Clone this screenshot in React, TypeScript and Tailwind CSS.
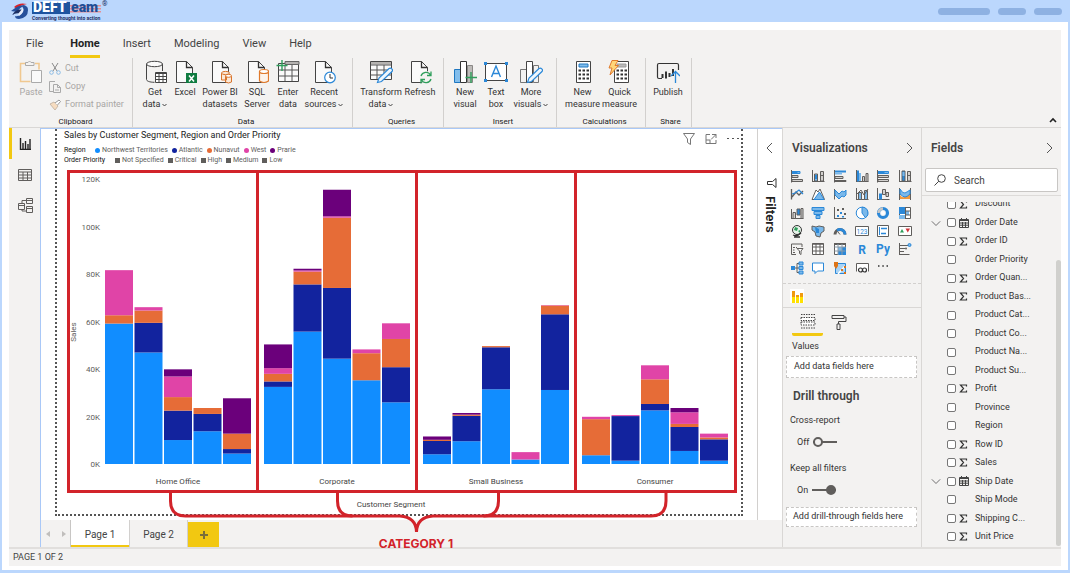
import type { ReactNode } from 'react';
import clsx from 'clsx';

const REGIONS = [
  { name: 'Northwest Territories', color: '#118dff' },
  { name: 'Atlantic', color: '#12239e' },
  { name: 'Nunavut', color: '#e66c37' },
  { name: 'West', color: '#e044a7' },
  { name: 'Prarie', color: '#6b007b' },
];

const PRIORITIES = ['Not Specified', 'Critical', 'High', 'Medium', 'Low'];

// sales in thousands, one row per priority, columns follow REGIONS
const SEGMENTS = [
  {
    name: 'Home Office',
    bars: [
      [59.2, 0, 3.5, 19, 0],
      [47, 12.5, 5.2, 1.4, 0],
      [10.1, 12.4, 5.7, 8.7, 3],
      [13.8, 7.3, 2.5, 0, 0],
      [4.4, 1.9, 6.5, 0, 14.9],
    ],
  },
  {
    name: 'Corporate',
    bars: [
      [32.5, 2.3, 3.2, 2.4, 10],
      [55.8, 19.9, 5.4, 0.5, 0.7],
      [44.4, 29.8, 29.6, 0.6, 11.2],
      [35.3, 0, 11.4, 1.6, 0],
      [26, 14.8, 11.9, 6.6, 0],
    ],
  },
  {
    name: 'Small Business',
    bars: [
      [4.1, 5.6, 0.5, 0, 1.4],
      [9.6, 10.7, 0.5, 0, 0.7],
      [31.5, 17.7, 0.5, 0, 0],
      [1.9, 0, 0, 3.1, 0],
      [31.2, 31.9, 3.7, 0.2, 0],
    ],
  },
  {
    name: 'Consumer',
    bars: [
      [3.7, 0, 15.2, 1, 0],
      [1.4, 18.8, 0, 0.4, 0],
      [22.6, 2.7, 10.4, 5.9, 0],
      [5.5, 10.1, 1.3, 4.9, 1.8],
      [1.4, 9, 0.8, 1.6, 0],
    ],
  },
];

type FieldKind = 'sum' | 'date' | 'text';

const FIELDS: { name: string; kind: FieldKind }[] = [
  { name: 'Discount', kind: 'sum' },
  { name: 'Order Date', kind: 'date' },
  { name: 'Order ID', kind: 'sum' },
  { name: 'Order Priority', kind: 'text' },
  { name: 'Order Quan...', kind: 'sum' },
  { name: 'Product Bas...', kind: 'sum' },
  { name: 'Product Cat...', kind: 'text' },
  { name: 'Product Co...', kind: 'text' },
  { name: 'Product Na...', kind: 'text' },
  { name: 'Product Su...', kind: 'text' },
  { name: 'Profit', kind: 'sum' },
  { name: 'Province', kind: 'text' },
  { name: 'Region', kind: 'text' },
  { name: 'Row ID', kind: 'sum' },
  { name: 'Sales', kind: 'sum' },
  { name: 'Ship Date', kind: 'date' },
  { name: 'Ship Mode', kind: 'text' },
  { name: 'Shipping C...', kind: 'sum' },
  { name: 'Unit Price', kind: 'sum' },
];

/* ---------- icons ---------- */

interface SvgProps {
  w: number;
  h: number;
  className?: string;
  children: ReactNode;
}

function Svg({ w, h, className, children }: SvgProps) {
  return (
    <svg width={w} height={h} viewBox={`0 0 ${w} ${h}`} fill="none" aria-hidden="true" className={clsx('shrink-0', className)}>
      {children}
    </svg>
  );
}

function Chevron({ dir, className }: { dir: 'left' | 'right' | 'down'; className?: string }) {
  const d = { left: 'M8 1 3 6l5 5', right: 'M4 1l5 5-5 5', down: 'M1 4l5 5 5-5' }[dir];
  return (
    <Svg w={12} h={12} className={className}>
      <path d={d} stroke="#555" />
    </Svg>
  );
}

function Caret() {
  return (
    <svg width="5" height="4" viewBox="0 0 5 4" fill="none" className="ml-0.5 inline-block" aria-hidden="true">
      <path d="M.5 1l2 2 2-2" stroke="#444" />
    </svg>
  );
}

function Page({ x = 3 }: { x?: number }) {
  return (
    <g transform={`translate(${x} 0)`}>
      <path d="M.5 1.500h10l6 6v15H.5z" fill="#fafafa" stroke="#444" />
      <path d="M10.500 1.500v6h6" stroke="#333" strokeWidth="1.300" />
    </g>
  );
}

function Pencil() {
  return (
    <path d="M8.500 22.500l1.500-4.500L20 8.500q1.500-1 2.800.3t.2 2.700L12.500 21.500z" fill="#eef6fc" stroke="#2b88d8" strokeWidth="1.200" />
  );
}

const paste = (
  <>
    <path d="M6 3.500H1.500v18h10M16 3.500h4v6" stroke="#f0c890" strokeWidth="1.600" />
    <path d="M6.500 5.500v-3h2.500q1.500-3 3 0h3v3z" stroke="#aaa" fill="#f3f2f1" />
    <path d="M12.500 10.500h10v12h-10z" fill="#fafafa" stroke="#aaa" />
  </>
);

const getData = (
  <>
    <path d="M3.500 4v15.500c0 1.500 3 2.800 8 2.800M19.500 4v7" stroke="#444" />
    <ellipse cx="11.500" cy="4" rx="8" ry="2.700" fill="#fafafa" stroke="#444" />
    <path d="M12.500 12.500h11v10h-11z" fill="#fff" stroke="#444" />
    <path d="M12.500 13.500h11M12.500 16.500h11M12.500 19.500h11M16 13v9M20 13v9" stroke="#444" />
  </>
);

const excel = (
  <>
    <Page x={3} />
    <path d="M13 13h11v10H13z" fill="#107c41" />
    <path d="M16 15.500l5 6m0-6l-5 6" stroke="#fff" strokeWidth="1.500" />
  </>
);

const powerBi = (
  <>
    <Page x={4} />
    <path d="M13.500 13v7h5v-7M17.500 16v6q3 2 6 0v-6" fill="#fbe8d6" stroke="#d9742b" />
    <ellipse cx="17.500" cy="13" rx="4" ry="1.600" fill="#fbe8d6" stroke="#d9742b" />
    <ellipse cx="20.500" cy="15.800" rx="3" ry="1.500" fill="#fff" stroke="#d9742b" />
  </>
);

const sqlServer = (
  <>
    <Page x={3} />
    <path d="M14.500 11.500v9.500q4.500 3 9 0v-9.500" fill="#fdf3ea" stroke="#e07a2c" strokeWidth="1.200" />
    <ellipse cx="19" cy="11.500" rx="4.500" ry="2" fill="#fff" stroke="#e07a2c" strokeWidth="1.200" />
  </>
);

const enterData = (
  <>
    <path d="M2.500 3.500h20v18h-20z" fill="#fafafa" stroke="#444" />
    <path d="M9 1.500h14v3H9z" fill="#b5b3b1" stroke="#666" />
    <path d="M2.500 10h20M2.500 16h20M9 5v16M16 5v16" stroke="#555" />
    <path d="M6 0v11M.5 5.500h11" stroke="#2f9e5b" strokeWidth="1.400" />
  </>
);

const recent = (
  <>
    <Page x={3} />
    <circle cx="18" cy="17.500" r="5.300" fill="#fff" stroke="#2b88d8" strokeWidth="1.200" />
    <path d="M18 14v4h3" stroke="#333" />
  </>
);

const transform = (
  <>
    <path d="M1.500 1.500h21v18h-21z" fill="#fafafa" stroke="#444" />
    <path d="M2 2h20v2.500H2z" fill="#b5b3b1" />
    <path d="M1.500 5h21M1.500 10h21M1.500 15h21M8 5v14M15 5v14" stroke="#555" />
    <Pencil />
  </>
);

const refresh = (
  <>
    <Page x={3} />
    <circle cx="18" cy="17.500" r="6.500" fill="#f3f2f1" />
    <path d="M13 16a5.200 5.200 0 0 1 9.500-1M23 19a5.200 5.200 0 0 1-9.500 1M23 11.500v4h-4M13 23.500v-4h4" stroke="#2f9e5b" strokeWidth="1.300" />
  </>
);

const newVisual = (
  <>
    <path d="M14.500 5.500h5v17h-5z" fill="#bdbbb9" stroke="#8a8886" />
    <path d="M1.500 9.500h6v13h-6z" fill="#83beec" stroke="#1f77c0" />
    <path d="M7.500 1.500h6v21h-6z" fill="#fff" stroke="#333" />
    <path d="M18 12v11M12.500 17.500H24" stroke="#2f9e5b" strokeWidth="1.400" />
  </>
);

const textBox = (
  <>
    <path d="M1.500 3.500h21v17h-21z" fill="#fff" stroke="#444" />
    <path d="M0 2h3v3H0zM21 2h3v3h-3zM0 19h3v3H0zM21 19h3v3h-3z" fill="#2b88d8" />
    <path d="M7.500 17L12 6l4.500 11M9 13.500h6" stroke="#2b88d8" strokeWidth="1.400" />
  </>
);

const moreVisuals = (
  <>
    <path d="M14.500 5.500h5v17h-5zM1.500 9.500h6v13h-6z" fill="#f3f2f1" stroke="#777" />
    <path d="M7.500 1.500h6v21h-6z" fill="#fff" stroke="#444" />
    <Pencil />
  </>
);

function Keypad({ x, flash }: { x: number; flash?: boolean }) {
  return (
    <g transform={`translate(${x} 0)`}>
      <path d="M.5 1.500h14v21H.5z" fill="#fff" stroke="#444" />
      <path d="M3 4h9v3H3z" fill={flash ? '#bbb' : '#83beec'} stroke={flash ? '#999' : '#1f77c0'} />
      {[9, 13, 17].map((y) => (
        <path key={y} d={`M2.500 ${y + 1.500}h2.500m1.500 0h2.500m1.500 0h2.500`} stroke="#333" strokeWidth="2" />
      ))}
    </g>
  );
}

const quickMeasure = (
  <>
    <Keypad x={6} flash />
    <path d="M4 .5h6l-3 5h3.500L2 15l2-7H1z" fill="#ffd67a" stroke="#e07a2c" />
  </>
);

const publish = (
  <>
    <path d="M6 18.500H3q-1.500 0-1.500-1.500V5q0-1.500 1.500-1.500h18q1.500 0 1.500 1.500v5" fill="none" stroke="#333" strokeWidth="1.200" />
    <path d="M6.500 14v4M10 11.500v7M13.500 13v4M17 9v7" stroke="#333" strokeWidth="2" />
    <path d="M19.500 23V11.500M15 16l4.500-4.500L24 16" stroke="#2b88d8" strokeWidth="1.300" />
  </>
);

const G = '#605e5c';
const B = '#2b88d8';
const L = '#7ab8ea';

const VISUALS: { label: string; art: ReactNode }[] = [
  { label: 'Stacked bar chart', art: <><path d="M1.500 1v12.500" stroke={G} /><path d="M2 2h5v3H2z" fill={B} /><path d="M7 2.500h3v2H7z" fill={L} stroke={B} /><path d="M2 6.500h6v2H2zM2 10.500h10.500v2H2z" fill="#d2d0ce" stroke={G} /></> },
  { label: 'Stacked column chart', art: <><path d="M1.500 1v12M1 12.500h12.500" stroke={G} /><path d="M3.500 5h3v7h-3z" fill={L} stroke={G} /><path d="M4 6h2v4H4z" fill={B} /><path d="M9.500 2.500h3v9.500h-3zM9.500 6.500h3" fill="#d2d0ce" stroke={G} /></> },
  { label: 'Clustered bar chart', art: <><path d="M1.500 1v12.500" stroke={G} /><path d="M2 1.500h11v2H2z" fill={B} /><path d="M2 3.500h7v2H2z" fill={L} /><path d="M2 7.500h8v2H2zM2 11.500h11v1H2z" fill="#d2d0ce" stroke={G} /></> },
  { label: 'Clustered column chart', art: <><path d="M1.500 1v12M1 12.500h12.500" stroke={G} /><path d="M2 1.500h2v11H2z" fill={B} /><path d="M4 4h2v8H4z" fill={L} /><path d="M7.500 7.500h2v5h-2zM11 4.500h2v8h-2z" fill="#d2d0ce" stroke={G} /></> },
  { label: '100% stacked bar chart', art: <><path d="M1.500 1v12.500" stroke={G} /><path d="M2 2h6v3H2z" fill={B} /><path d="M8 2.500h4.500v2H8z" fill={L} stroke={B} /><path d="M2 6.500h10.500v2H2zM2 10.500h10.500v2H2z" fill="#d2d0ce" stroke={G} /></> },
  { label: '100% stacked column chart', art: <><path d="M1.500 1v12M1 12.500h12.500" stroke={G} /><path d="M4 2h3v10H4z" fill={B} stroke={G} /><path d="M4.500 3h2v4h-2z" fill={L} /><path d="M9.500 2.500h3v9.500h-3zM9.500 6.500h3" fill="#d2d0ce" stroke={G} /></> },
  { label: 'Line chart', art: <><path d="M1.500 2v10.500M2 10l4-5 3 3 4-4" stroke={G} strokeWidth="1.300" /><path d="M2 7l3-1 4-3 4 4" stroke={B} strokeWidth="1.300" /></> },
  { label: 'Area chart', art: <><path d="M1 12.500L5 3l2 2 2-3 4.500 10.500z" fill="#fff" stroke={G} /><path d="M3 12.500L8.500 5l4.500 7.500z" fill={L} stroke={B} /></> },
  { label: 'Stacked area chart', art: <><path d="M1.500 2v10.500" stroke={G} /><path d="M2 3l4 4 3-3 2 1 2-2v5l-2 2-2-1-3 3-4-4z" fill={L} stroke={B} /></> },
  { label: 'Line and stacked column chart', art: <><path d="M1.500 1v12M1 12.500h12.500" stroke={G} /><path d="M3.500 5.500h3v7h-3zM9.500 3.500h3v9h-3z" fill={L} stroke={G} /><path d="M2 7l4-4 3 5 4-6" stroke={G} /></> },
  { label: 'Line and clustered column chart', art: <><path d="M1.500 1v12M1 12.500h12.500" stroke={G} /><path d="M3 6.500h3v6H3z" fill={B} /><path d="M6.500 2.500h3v5h-3zM10 5.500h2.500v4H10z" fill="#d2d0ce" stroke={G} /></> },
  { label: 'Ribbon chart', art: <><path d="M1.500 1v12M12.500 1v12" stroke={G} /><path d="M2 8q3 4 5 1t5-2v5H2z" fill="#f0983c" /><path d="M2 2q3 5 5 4t5-3v4q-3 3-5 3T2 7z" fill={L} stroke={B} /></> },
  { label: 'Waterfall chart', art: <><path d="M1.500 3v10M1 12.500h12.500" stroke={G} /><path d="M3 6.500h2.500v6H3zM11 2.500h2v10h-2z" fill="#d2d0ce" stroke={G} /><path d="M7 3h3v6H7z" fill={B} stroke={G} /></> },
  { label: 'Funnel', art: <path d="M1 1.500h12v3H1zM3 5.500h8v3H3zM5 9.500h4v3H5z" fill={L} stroke={B} /> },
  { label: 'Scatter chart', art: <><path d="M1.500 1v12M1 12.500h12" stroke={G} /><path d="M4 3h2v2H4zM9 2h2v2H9zM11 7h2v2h-2z" fill={G} /><path d="M7 6h2v2H7zM4 9h2v2H4zM9 10h2v1.500H9z" fill={B} /></> },
  { label: 'Pie chart', art: <><circle cx="7" cy="7" r="5.800" fill="#fff" stroke={B} /><path d="M7 1.200V7l3.500 4.800A5.800 5.800 0 0 0 7 1.200z" fill={L} stroke={B} /></> },
  { label: 'Donut chart', art: <><circle cx="7" cy="7" r="4.500" stroke={B} strokeWidth="3.200" /><path d="M7 2.500a4.500 4.500 0 0 0-4.500 4.500" stroke="#c8c6c4" strokeWidth="2.400" /><circle cx="7" cy="7" r="2" fill="#fff" /></> },
  { label: 'Treemap', art: <><path d="M1.500 1.500h11v11h-11z" fill="#fff" stroke={G} /><path d="M1 1h6v7H1z" fill={B} /><path d="M1 9h6v4H1zM8 5h3v4H8z" fill={L} /><path d="M7.500 1v12M8 5h5M8 9h5" stroke={G} /></> },
  { label: 'Map', art: <><circle cx="7" cy="6" r="4.500" fill="#e8f3ea" stroke="#333" /><path d="M5 3l3 1-1 3-3-1zM8 7l2-1v3z" fill="#2f9e5b" /><path d="M3 11q4 2 8-2M4 13h6" stroke="#333" strokeWidth="1.300" /></> },
  { label: 'Filled map', art: <><path d="M1 2l4 1 3-1 5 1v4l-3 2-1 4-4-1-1-4-3-2z" fill={L} stroke={G} /><path d="M4 3l4 2v4H5z" fill={B} /></> },
  { label: 'Gauge', art: <><path d="M2 10.500a5 5 0 0 1 10 0" stroke={G} strokeWidth="3" /><path d="M4 6.500a5 5 0 0 1 8 4" stroke={B} strokeWidth="2.600" /><path d="M7 10.500L5 8" stroke={G} /></> },
  { label: 'Card', art: <><path d="M.5 2.500h13v9H.5z" fill="#fff" stroke={G} /><text x="7" y="9.500" fontSize="6.500" textAnchor="middle" fill={B}>123</text></> },
  { label: 'Multi-row card', art: <><path d="M1.500 1.500h11v11h-11z" fill="#fff" stroke={G} /><path d="M3.500 3v8" stroke={B} /><path d="M5 4.500h6M5 9.500h5" stroke={B} strokeWidth="1.500" /></> },
  { label: 'KPI', art: <><path d="M.5 2.500h13v9H.5z" fill="#fff" stroke={G} /><path d="M2 8.500L4 5l2 3.500z" fill="#2f9e5b" /><path d="M7.500 4.500h4.500L9.800 8.500z" fill="#d13438" /></> },
  { label: 'Slicer', art: <><path d="M12 5V2H1.500v10.500H6M3 5.500h2M3 8h1.500M3 10.500h2M6 5.500h1" stroke={G} /><path d="M7 6.500h6L11 9v3.500l-1.500-1V9z" fill="#fff" stroke={G} /></> },
  { label: 'Table', art: <><path d="M1.500 1.500h11v11h-11z" fill="#fff" stroke={G} /><path d="M1.500 2h11" stroke={G} strokeWidth="1.500" /><path d="M1.500 5h11M1.500 9h11M5 2v11M9 2v11" stroke={G} /></> },
  { label: 'Matrix', art: <><path d="M1.500 1.500h11v11h-11z" fill="#fff" stroke={G} /><path d="M5 5h4v4H5z" fill={L} /><path d="M9 5h4v8H5V9h4z" fill={B} /><path d="M1 2h12" stroke={G} strokeWidth="2" /><path d="M1.500 5h11M1.500 9h11M5 2v11M9 2v11" stroke="#8a9aa8" /></> },
  { label: 'R script visual', art: <text x="7" y="11.500" fontSize="12" fontWeight="700" textAnchor="middle" fill={B}>R</text> },
  { label: 'Python visual', art: <text x="7" y="11" fontSize="12" fontWeight="700" textAnchor="middle" fill={B}>Py</text> },
  { label: 'Key influencers', art: <><path d="M1.500 1v12M1.500 12.500h10M2 3.500h8M2 6.500h5M2 9.500h4" stroke={G} /><circle cx="11.500" cy="3" r="1.500" fill={L} stroke={B} /><circle cx="8" cy="6.500" r="1" fill={G} /></> },
  { label: 'Decomposition tree', art: <><path d="M1 5h4v4H1z" fill={B} /><path d="M5 7h4M7 2.500v9M7 2.500h2M7 11.500h2" stroke={G} /><path d="M9 1h4v3H9zM9 5.500h4v3H9zM9 10h4v3H9z" fill={L} stroke={B} /></> },
  { label: 'Q&A', art: <path d="M1.500 2h11v8H6.500L4 12.500V10H1.500z" fill="#fff" stroke={B} /> },
  { label: 'ArcGIS map', art: <><path d="M2.500 2.500h10v10h-10z" fill="#a9d3f4" stroke={B} /><path d="M5 13l7-8" stroke="#fff" strokeWidth="1.500" /><path d="M1 1h4v4l-2 3-2-3zM8 8h2v2H8zM11 11h2v2h-2zM11 5h2v2h-2z" fill="#dd7417" /></> },
  { label: 'Paginated report', art: <><path d="M1.500 10.500v-8h12v8" fill="#fff" stroke={G} /><circle cx="5.500" cy="9" r="2" stroke="#333" strokeWidth="1.200" /><circle cx="9.500" cy="9" r="2" stroke="#333" strokeWidth="1.200" /></> },
  { label: 'Get more visuals', art: <path d="M2 5h1.500M6.300 5h1.500M10.500 5H12" stroke="#333" strokeWidth="1.500" /> },
];

/* ---------- pieces ---------- */

function Logo() {
  return (
    <svg width="98" height="22" viewBox="0 0 98 22" aria-label="DEFTeam" role="img">
      <path d="M4 7Q9 2 17 4q-7 1-10 5z" fill="#d8232a" />
      <path d="M1 11q8-7 15-6-6 2-9 7z" fill="#27509b" />
      <path d="M2 15q5-7 11-5l-3 4q-3-2-8 1z" fill="#1c2f63" />
      <path d="M12 6q6-1 6 4 0 8-9 9-4 0-4-3 3 1 6-2 4-4 1-8z" fill="#27509b" />
      <path d="M8 14q4-5 5-6 2 4-4 8z" fill="#e8eefc" />
      <path d="M22 2h38v12H22z" fill="#1e549f" />
      <path d="M60 5h31v1.500H60zM60 8h31v1.500H60zM60 11h31v1.500H60z" fill="#e58f94" />
      <text x="23" y="12" fontSize="14" fontWeight="900">
        <tspan fill="#fff">DEFT</tspan>
        <tspan x="61" fill="#1e4f97">eam</tspan>
      </text>
      <text x="22" y="20" fontSize="5" fontWeight="700" fill="#1c2f63">Converting thought into action</text>
      <text x="92" y="6" fontSize="7" fill="#1c2f63">®</text>
    </svg>
  );
}

interface RibbonButtonProps {
  icon: ReactNode;
  lines: string[];
  className: string;
  menu?: boolean;
}

function RibbonButton({ icon, lines, className, menu }: RibbonButtonProps) {
  return (
    <button type="button" className={clsx('flex flex-col items-center gap-0.5 whitespace-nowrap', className)}>
      <Svg w={24} h={24}>{icon}</Svg>
      <span className="leading-3">
        {lines.map((line, i) => (
          <span key={line} className="block">
            {line}
            {menu && i === lines.length - 1 && <Caret />}
          </span>
        ))}
      </span>
    </button>
  );
}

function RibbonGroup({ title, className, children }: { title: string; className: string; children: ReactNode }) {
  return (
    <section aria-label={title} className={clsx('flex h-[69px] shrink-0 flex-col border-r border-[#d2d0ce]', className)}>
      <div className="flex flex-1 pt-0.5">{children}</div>
      <h2 className="text-center text-[8px] leading-[10px] text-[#222]">{title}</h2>
    </section>
  );
}

function Ribbon() {
  const tab = 'h-7 border-b-[3px] border-transparent pt-1';
  return (
    <header className="border-b border-[#d9d7d5]">
      <nav className="flex gap-[23px] pl-[17px] text-[11px] text-[#444]">
        <button type="button" className={clsx(tab, 'mr-1')}>File</button>
        <button type="button" className="h-7 border-b-[3px] border-[#f2c811] pt-1 font-bold text-[#222]">Home</button>
        {['Insert', 'Modeling', 'View', 'Help'].map((name) => (
          <button key={name} type="button" className={tab}>{name}</button>
        ))}
      </nav>

      <div className="flex text-[9px] text-[#333]">
        <RibbonGroup title="Clipboard" className="w-[124px] pl-2.5">
          <div className="flex text-[#a8a6a4]">
            <RibbonButton icon={paste} lines={['Paste']} className="w-6" />
            <div className="ml-1.5 flex flex-col">
              <button type="button" className="flex h-[18px] items-center gap-1">
                <Svg w={12} h={12}>
                  <path d="M3 0l5 8M9 0L4 8" stroke="#888" />
                  <circle cx="2.500" cy="9.500" r="1.800" stroke="#8abbe6" />
                  <circle cx="9.500" cy="9.500" r="1.800" stroke="#8abbe6" />
                </Svg>
                Cut
              </button>
              <button type="button" className="flex h-[18px] items-center gap-1">
                <Svg w={12} h={12}>
                  <path d="M4 10.500H.5V.5H6M4.500 3.500h4l3 3v5h-7zM8.500 3.500v3h3M6 9h4" stroke="#aaa" />
                </Svg>
                Copy
              </button>
              <button type="button" className="flex h-[18px] items-center gap-1 whitespace-nowrap">
                <Svg w={12} h={12}>
                  <path d="M1 5l4-2 4 4-3 4z" fill="#f6dcc0" stroke="#c9b9a8" />
                  <path d="M6 4l4-3 1.500 1.500L8.500 6" fill="#fff" stroke="#999" />
                </Svg>
                Format painter
              </button>
            </div>
          </div>
        </RibbonGroup>

        <RibbonGroup title="Data" className="w-[220px] pl-[7px]">
          <RibbonButton icon={getData} lines={['Get', 'data']} menu className="w-[30px]" />
          <RibbonButton icon={excel} lines={['Excel']} className="w-[30px]" />
          <RibbonButton icon={powerBi} lines={['Power BI', 'datasets']} className="w-10" />
          <RibbonButton icon={sqlServer} lines={['SQL', 'Server']} className="w-[34px]" />
          <RibbonButton icon={enterData} lines={['Enter', 'data']} className="w-7" />
          <RibbonButton icon={recent} lines={['Recent', 'sources']} menu className="w-11" />
        </RibbonGroup>

        <RibbonGroup title="Queries" className="w-[91px] pl-[7px]">
          <RibbonButton icon={transform} lines={['Transform', 'data']} menu className="w-[42px]" />
          <RibbonButton icon={refresh} lines={['Refresh']} className="w-9" />
        </RibbonGroup>

        <RibbonGroup title="Insert" className="w-[113px] pl-1.5">
          <RibbonButton icon={newVisual} lines={['New', 'visual']} className="w-[30px]" />
          <RibbonButton icon={textBox} lines={['Text', 'box']} className="w-8" />
          <RibbonButton icon={moreVisuals} lines={['More', 'visuals']} menu className="w-[38px]" />
        </RibbonGroup>

        <RibbonGroup title="Calculations" className="w-[89px] pl-[7px]">
          <RibbonButton icon={<Keypad x={5} />} lines={['New', 'measure']} className="w-[37px]" />
          <RibbonButton icon={quickMeasure} lines={['Quick', 'measure']} className="w-[37px]" />
        </RibbonGroup>

        <RibbonGroup title="Share" className="w-[46px] pl-1">
          <RibbonButton icon={publish} lines={['Publish']} className="w-9" />
        </RibbonGroup>

        <button type="button" aria-label="Collapse ribbon" className="mr-1 mb-1 ml-auto self-end">
          <Svg w={8} h={6}>
            <path d="M1 5l3-3 3 3" stroke="#222" strokeWidth="1.600" />
          </Svg>
        </button>
      </div>
    </header>
  );
}

function ViewRail() {
  const item = 'flex h-[31px] items-center justify-center border-l-[3px] border-transparent pr-0.5';
  return (
    <nav className="flex w-8 shrink-0 flex-col border-r border-[#a9c8f7]">
      <button type="button" aria-label="Report view" className="flex h-[31px] items-center justify-center border-l-[3px] border-[#f2c811] pr-0.5">
        <Svg w={12} h={12}>
          <path d="M1.500 0v11.500H12M4 5v6M6.500 3v8M9 6v5M11 1v10" stroke="#222" strokeWidth="1.400" />
        </Svg>
      </button>
      <button type="button" aria-label="Data view" className={item}>
        <Svg w={14} h={12}>
          <path d="M.5.5h13v11H.5zM.5 3h13M.5 6h13M.5 9h13M5 3v8.500M9.500 3v8.500" stroke="#605e5c" />
        </Svg>
      </button>
      <button type="button" aria-label="Model view" className={item}>
        <Svg w={15} h={15}>
          <path d="M.5 5.500h6v6h-6zM.5 7.500h6M8.500.5h6v5h-6zM8.500 2.500h6M8.500 8.500h6v6h-6zM8.500 10.500h6M4 5.500v-3h4.500M4 11.500v1.500h4.500" stroke="#605e5c" />
        </Svg>
      </button>
    </nav>
  );
}

const BASE = 296;
const PX_PER_K = 2.3725;

function SalesChart() {
  return (
    <svg
      viewBox="0 0 684 390"
      className="relative z-10 h-[390px] w-full overflow-visible"
      role="img"
      aria-label="Stacked columns of sales for each customer segment"
    >
      <g fontSize="8" fill="#605e5c">
        {[0, 20, 40, 60, 80, 100, 120].map((k) => (
          <text key={k} x="43" y={BASE + 3 - k * PX_PER_K} textAnchor="end">{k}K</text>
        ))}
        <text transform="translate(19 164) rotate(-90)" textAnchor="middle">Sales</text>
        <text x="334" y="339" textAnchor="middle" fill="#444">Customer Segment</text>
      </g>

      {SEGMENTS.map((segment, s) => (
        <g key={segment.name}>
          {segment.bars.map((bar, b) => {
            let top = BASE;
            return bar.map((value, r) => {
              const height = value * PX_PER_K;
              top -= height;
              return (
                <rect
                  key={`${b}-${r}`}
                  x={48 + s * 159 + b * 29.5}
                  y={top}
                  width="28"
                  height={height}
                  fill={REGIONS[r].color}
                />
              );
            });
          })}
          <text x={121 + s * 159} y="316" textAnchor="middle" fontSize="8" fill="#444">{segment.name}</text>
        </g>
      ))}

      {/* category callout */}
      <g stroke="#d2232a" strokeWidth="3" fill="none">
        <path d="M11.500 3.500h667v320h-667zM200.500 3.500v320M359.500 3.500v320M518.500 3.500v320" />
        <path d="M113.500 324v9q0 15 15 15H343q16 1 16.500 16Q360 349 376 348h218q15 0 15-15v-9" />
        <path d="M280.500 324v9q0 15 15 15M441.500 324v9q0 15-15 15" />
      </g>
      <text x="359" y="380" textAnchor="middle" fontSize="12" fontWeight="700" fill="#d2232a" className="font-[Inter,sans-serif]">
        CATEGORY 1
      </text>
    </svg>
  );
}

function ReportCanvas() {
  return (
    <main className="min-w-0 flex-1 bg-white px-3.5">
      <div className="flex h-[387px] flex-col border-2 border-t-0 border-dotted border-[#555]">
        <div className="flex h-[39px] justify-between">
          <div className="pl-[7px]">
            <h1 className="h-4 text-[9px] leading-[12px] text-[#222]">
              Sales by Customer Segment, Region and Order Priority
            </h1>
            <div className="flex items-center text-[7px] leading-[10px] text-[#605e5c]">
              <span className="mr-1.5 w-[25px] text-[#111]">Region</span>
              {REGIONS.map((region) => (
                <span key={region.name} className="mr-1 flex items-center gap-0.5">
                  <span className="size-[5px] rounded-full" style={{ background: region.color }} />
                  {region.name}
                </span>
              ))}
            </div>
            <div className="flex items-center text-[7px] leading-[10px] text-[#605e5c]">
              <span className="mr-[7px] w-11 text-[#111]">Order Priority</span>
              {PRIORITIES.map((priority) => (
                <span key={priority} className="mr-1 flex items-center gap-0.5">
                  <span className="size-[5px] bg-[#605e5c]" />
                  {priority}
                </span>
              ))}
            </div>
          </div>
          <div className="flex gap-2.5 pt-1 pr-0.5">
            <Svg w={12} h={12}>
              <path d="M.5.5h11L7.500 6v5.500l-3-2V6z" stroke="#777" />
            </Svg>
            <Svg w={12} h={12}>
              <path d="M5 1.500H1v9h10V7M7 1.500h4V5M11 1.500L6 6.500M1 7h4v3.500" stroke="#777" />
            </Svg>
            <Svg w={12} h={12}>
              <path d="M0 5.500h2M5 5.500h2M10 5.500h2" stroke="#555" />
            </Svg>
          </div>
        </div>
        <div className="h-[346px]">
          <SalesChart />
        </div>
      </div>
    </main>
  );
}

function FiltersPane() {
  return (
    <aside className="flex w-[25px] shrink-0 flex-col items-center border-l border-[#d2d0ce] bg-white pt-[13px]">
      <Chevron dir="left" />
      <Svg w={10} h={10} className="mt-6 ml-1">
        <path d="M9 .5v9L5.500 6.500H.5v-3h5z" stroke="#333" />
      </Svg>
      <h2 className="mt-2 text-[13px] font-semibold text-[#222] [writing-mode:vertical-rl]">Filters</h2>
    </aside>
  );
}

function PageTabs() {
  return (
    <div className="flex h-[27px] text-[10px] text-[#444]">
      <div className="flex w-[30px] items-center justify-center gap-3 border-r border-[#c8c6c4]">
        <Svg w={4} h={6}><path d="M4 0v6L0 3z" fill="#c0bebc" /></Svg>
        <Svg w={4} h={6}><path d="M0 0v6l4-3z" fill="#c0bebc" /></Svg>
      </div>
      <button type="button" className="w-[58px] border-b-2 border-[#f2c811] bg-white pt-1">Page 1</button>
      <button type="button" className="w-[59px] border-r border-l border-[#d2d0ce] pt-0.5">Page 2</button>
      <button type="button" aria-label="New page" className="mt-0.5 flex w-[31px] items-center justify-center bg-[#f2c811]">
        <Svg w={10} h={10}><path d="M5 1v8M1 5h8" stroke="#7a6f3a" strokeWidth="2" /></Svg>
      </button>
    </div>
  );
}

const switchClass =
  "relative h-[10px] w-6 appearance-none before:absolute before:inset-x-0 before:top-1 before:h-[2px] before:bg-[#605e5c] after:absolute after:top-0 after:left-0 after:size-[10px] after:rounded-full after:border-2 after:border-[#605e5c] after:bg-[#f3f2f1] checked:after:left-[14px] checked:after:bg-[#605e5c]";

function VisualizationsPane() {
  return (
    <aside className="w-[139px] shrink-0 border-l border-[#d9d7d5] text-[9px] text-[#333]">
      <div className="flex h-[39px] items-center justify-between pr-1.5 pl-[9px]">
        <h2 className="text-[12px] font-semibold text-[#444]">Visualizations</h2>
        <Chevron dir="right" />
      </div>
      <div className="mr-[5px] ml-[3px] grid h-[110px] grid-cols-6 grid-rows-6 place-items-center">
        {VISUALS.map(({ label, art }) => (
          <button key={label} type="button" aria-label={label}>
            <Svg w={14} h={14}>{art}</Svg>
          </button>
        ))}
      </div>

      <div className="mt-1.5 border-t border-dashed border-[#d2d0ce] pt-[5px] pb-1 pl-[7px]">
        <span className="flex size-[14px] items-end justify-center gap-px bg-white">
          <span className="h-3 w-[3px] border-t-[6px] border-[#f09a10] bg-[#ffe100]" />
          <span className="h-2 w-[3px] border-t-2 border-[#f09a10] bg-[#ffe100]" />
          <span className="h-2.5 w-[3px] border-t-4 border-[#f09a10] bg-[#ffe100]" />
        </span>
      </div>

      <div className="flex h-[29px] border-t border-[#d9d7d5] pl-[9px]">
        <button type="button" aria-label="Fields" className="flex w-[31px] items-center justify-center rounded-xs border-b-[3px] border-[#f2c811]">
          <Svg w={16} h={16}>
            <path d="M1 1.500h14M1 15h14" stroke="#444" strokeDasharray="1.500 1" />
            <path d="M1 4.500h14v3H1zM1 9h14v3H1z" fill="#fff" stroke="#444" strokeDasharray="1.500 1" />
          </Svg>
        </button>
        <button type="button" aria-label="Format" className="flex w-[31px] items-center justify-center">
          <Svg w={16} h={16}>
            <path d="M1 1.500h12v3H1zM13 3h2v4.500H7.500V10M6 10h3v5.500H6z" fill="none" stroke="#444" />
          </Svg>
        </button>
      </div>

      <p className="pt-1 pl-[9px] leading-3">Values</p>
      <div className="mt-1 mr-1 ml-[3px] flex h-[22px] items-center border border-dashed border-[#c8c6c4] bg-white pl-[7px]">
        Add data fields here
      </div>

      <h2 className="mt-2.5 pl-2.5 text-[12px] leading-4 font-semibold text-[#444]">Drill through</h2>
      <div className="pl-[7px]">
        <p className="mt-2.5 leading-3">Cross-report</p>
        <label className="mt-2.5 flex items-center gap-1 pl-[7px] leading-3">
          Off
          <input type="checkbox" role="switch" className={switchClass} />
        </label>
        <p className="mt-3.5 leading-3">Keep all filters</p>
        <label className="mt-2.5 flex items-center gap-1 pl-[7px] leading-3">
          On
          <input type="checkbox" role="switch" defaultChecked className={switchClass} />
        </label>
      </div>
      <div className="mt-[11px] mr-1 ml-[3px] flex h-5 items-center border border-dashed border-[#c8c6c4] bg-white pl-1.5 whitespace-nowrap">
        Add drill-through fields here
      </div>
    </aside>
  );
}

function FieldRow({ name, kind }: { name: string; kind: FieldKind }) {
  return (
    <li className="flex items-center pl-[9px]">
      <span className="w-4">{kind === 'date' && <Chevron dir="down" className="size-2.5" />}</span>
      <label className="flex items-center whitespace-nowrap">
        <input type="checkbox" className="size-[9px] appearance-none rounded-xs border border-[#777] bg-white" />
        <span className="flex w-[19px] pl-[3px]">
          {kind === 'sum' && (
            <Svg w={9} h={9}>
              <path d="M7.500 2.500V1h-6l3 3.500-3 3.500h6V6.500" stroke="#333" strokeWidth="1.200" />
            </Svg>
          )}
          {kind === 'date' && (
            <Svg w={10} h={10}>
              <path d="M.5 1.500h9v8h-9zM1 2.500h8M2.500 0v2M7.500 0v2M1 5h8M1 7.200h8M3.500 4v5M6.500 4v5" stroke="#444" />
            </Svg>
          )}
        </span>
        {name}
      </label>
    </li>
  );
}

function FieldsPane() {
  return (
    <aside className="flex w-[140px] shrink-0 flex-col border-l border-[#d9d7d5] text-[9px] text-[#333]">
      <div className="flex h-[39px] items-center justify-between pr-1.5 pl-[9px]">
        <h2 className="text-[12px] font-semibold text-[#444]">Fields</h2>
        <Chevron dir="right" />
      </div>
      <label className="mx-[3px] mt-px flex h-6 items-center gap-2 rounded-xs border border-[#c8c6c4] bg-white pl-2">
        <Svg w={12} h={12}>
          <circle cx="7.500" cy="4.500" r="3.800" stroke="#444" />
          <path d="M4.800 7.200L.5 11.500" stroke="#444" />
        </Svg>
        <input type="search" aria-label="Search fields" placeholder="Search" className="w-20 text-[10px] outline-none placeholder:text-[#444]" />
      </label>
      <div className="mt-[3px] border-t border-[#dddbd9]" />
      <div className="flex h-[350px]">
        <div className="mt-1.5 flex flex-1 flex-col justify-end overflow-hidden">
          <ul className="grid h-[351px] shrink-0 auto-rows-fr">
            {FIELDS.map((field) => (
              <FieldRow key={field.name} {...field} />
            ))}
          </ul>
        </div>
        <div className="mt-16 w-[5px] rounded-full bg-[#d0d0cd]" />
      </div>
    </aside>
  );
}

export default function App() {
  return (
    <div className="flex min-h-screen flex-col bg-[#bbd7fd] font-[Roboto,sans-serif]">
      <div className="flex h-[22px] items-center justify-between pr-2 pl-2.5">
        <Logo />
        <div className="flex gap-2">
          <span className="h-[7px] w-[52px] rounded-full bg-[#8eb1e2]" />
          <span className="h-[7px] w-7 rounded-full bg-[#8eb1e2]" />
          <span className="h-[7px] w-7 rounded-full bg-[#8eb1e2]" />
        </div>
      </div>

      <div className="mx-0.5 mb-[3px] flex-1 bg-white px-[7px] pt-2 pb-1">
        <div className="bg-[#f3f2f1]">
          <Ribbon />
          <div className="flex">
            <ViewRail />
            <div className="flex min-w-0 flex-1 flex-col">
              <div className="flex h-[392px] border-t border-[#a9c8f7]">
                <ReportCanvas />
                <FiltersPane />
              </div>
              <PageTabs />
            </div>
            <VisualizationsPane />
            <FieldsPane />
          </div>
          <footer className="h-[19px] border-t-2 border-[#e1dfdd] pl-1 text-[9px] leading-4 text-[#444]">PAGE 1 OF 2</footer>
        </div>
      </div>
    </div>
  );
}
